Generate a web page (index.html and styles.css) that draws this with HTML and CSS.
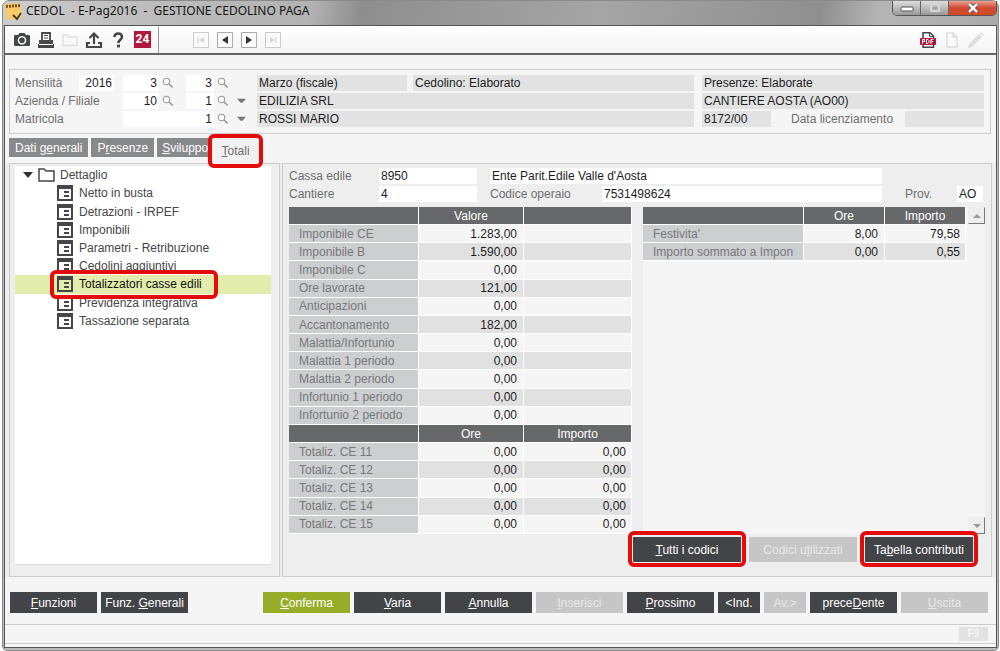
FILE: index.html
```html
<!DOCTYPE html>
<html lang="it">
<head>
<meta charset="utf-8">
<title>CEDOL - E-Pag2016 - GESTIONE CEDOLINO PAGA</title>
<link rel="stylesheet" href="styles.css">
</head>
<body>
<svg class="defs" aria-hidden="true">
  <symbol id="lens" viewBox="0 0 12 12"><circle cx="4.5" cy="4.5" r="3.2" fill="#fff" stroke="#999" stroke-width="1.1"/><path d="M7 7l3.6 3.4" stroke="#999" stroke-width="1.6"/></symbol>
  <symbol id="down" viewBox="0 0 10 6"><path d="M0 .5h10L6 5H4z" fill="#777"/></symbol>
  <symbol id="form" viewBox="0 0 16 16"><path fill="#454648" fill-rule="evenodd" d="M0 0h16v16H0zM2 4v10h12V4z"/><path d="M7 6h5v2H7zM7 10h5v2H7z" fill="#454648"/></symbol>
</svg>
<div class="window">
  <header class="titlebar">
    <svg class="app-icon" viewBox="0 0 17 18"><path d="M0 1l15-1 2 14-9 3-7-2z" fill="#f8cb68"/><path d="M1 3.500l14-1" stroke="#7a5418" stroke-width="3" stroke-dasharray="2 1"/><path d="M8 12l4 4 4-6" fill="none" stroke="#4a3b20" stroke-width="1.800"/></svg>
    <h1>CEDOL&nbsp; - E-Pag2016&nbsp; -&nbsp; GESTIONE CEDOLINO PAGA</h1>
    <div class="win-buttons">
      <button class="win-min" aria-label="Riduci a icona"><svg viewBox="0 0 14 10"><rect x="1" y="4" width="12" height="4" rx="1" fill="#fff" stroke="#555"/></svg></button>
      <button class="win-max" aria-label="Ingrandisci"><svg viewBox="0 0 14 10"><path d="M3 1h8v7H3z" fill="none" stroke="#d5d5d5" stroke-width="2"/><path d="M5 4h4v2H5z" fill="#999"/></svg></button>
      <button class="win-close" aria-label="Chiudi"><svg viewBox="0 0 14 10"><path d="M3 1l8 8M11 1L3 9" stroke="#634" stroke-width="4"/><path d="M3 1l8 8M11 1L3 9" stroke="#fff" stroke-width="2.500"/></svg></button>
    </div>
  </header>
  <main class="content">
    <div class="toolbar">
      <div class="tools">
        <button aria-label="Cattura"><svg viewBox="0 0 18 18"><path fill="#454648" fill-rule="evenodd" d="M1 5q0-1 1-1h3l1.500-2h5L13 4h3q1 0 1 1v9q0 1-1 1H2q-1 0-1-1zM9 5a4.300 4.300 0 1 0 .01 0z"/><circle cx="9" cy="9.300" r="2.800" fill="#454648"/></svg></button>
        <button aria-label="Stampa"><svg viewBox="0 0 18 18"><path d="M5 2h8v8H5z" fill="#fff" stroke="#454648" stroke-width="1.800"/><path d="M7 4.500h4M7 7h4" stroke="#454648"/><path d="M2 9h2v2h10V9h2v4H2zM1 13h16v4H1z" fill="#454648"/><path d="M2 13.500h14" stroke="#fff"/></svg></button>
        <button aria-label="Apri" disabled><svg viewBox="0 0 18 18"><path d="M2 14.500V4h5l1 2h8v8.500z" fill="none" stroke="#ddd" stroke-width="1.400"/></svg></button>
        <button aria-label="Carica"><svg viewBox="0 0 18 18"><path d="M9 13V3M4.500 7L9 2.500 13.500 7M5 12H2v4h14v-4h-3" fill="none" stroke="#454648" stroke-width="2.200"/></svg></button>
        <button aria-label="Aiuto"><svg viewBox="0 0 18 18"><path d="M5.500 6q0-3.500 3.700-3.500T13 6c0 2.500-3.500 2.500-3.500 6" fill="none" stroke="#454648" stroke-width="2.600"/><path d="M8 13.600h3v2.800H8z" fill="#454648"/></svg></button>
        <button class="b24" aria-label="24 ore">24</button>
      </div>
      <div class="nav">
        <button aria-label="Primo" disabled><svg viewBox="0 0 16 16"><path d="M.5.500h15v15H.5z" fill="#fafafa" stroke="#ccc"/><path d="M5 5v6" stroke="#ccc"/><path d="M11 5v6L6 8z" fill="#d5d5d5"/></svg></button>
        <button aria-label="Indietro"><svg viewBox="0 0 16 16"><path d="M.5.500h15v15H.5z" fill="#fafafa" stroke="#aaa"/><path d="M11 4v8L5 8z" fill="#333"/></svg></button>
        <button aria-label="Avanti"><svg viewBox="0 0 16 16"><path d="M.5.500h15v15H.5z" fill="#fafafa" stroke="#aaa"/><path d="M5 4v8l6-4z" fill="#333"/></svg></button>
        <button aria-label="Ultimo" disabled><svg viewBox="0 0 16 16"><path d="M.5.500h15v15H.5z" fill="#fafafa" stroke="#ccc"/><path d="M11 5v6" stroke="#ccc"/><path d="M5 5v6l5-3z" fill="#d5d5d5"/></svg></button>
      </div>
      <div class="docs">
        <button aria-label="PDF"><svg viewBox="0 0 18 18"><path d="M4 8V1.800h7L14.500 5v11.200H4V12" fill="#fff" stroke="#454648" stroke-width="1.500"/><path d="M10.500 2v3.500h4" fill="none" stroke="#454648"/><rect x="1" y="7" width="16" height="7" rx="1" fill="#b3163b"/><path d="M3.500 13V8.500h2v2h-2M7.500 8.500v4h1.500l1-1v-2l-1-1zM12 13V8.500h2.500M12 10.500h2" fill="none" stroke="#fff"/></svg></button>
        <button aria-label="Documento" disabled><svg viewBox="0 0 18 18"><path d="M4 2h6l4 4v10H4zM10 2v4h4" fill="none" stroke="#ddd" stroke-width="1.500"/></svg></button>
        <button aria-label="Modifica" disabled><svg viewBox="0 0 18 18"><path d="M1 17l1-4L12 3l3 3L5 16zM13 2l1-1 3 3-1 1z" fill="#ddd"/></svg></button>
      </div>
    </div>

    <section class="summary">
      <div class="keys">
        <label class="first" for="anno">Mensilità</label><input id="anno" class="year" value="2016"><span class="push"></span>
        <input class="w36" aria-label="Mese da" value="3"><button class="lens" aria-label="Cerca mese da"><svg><use href="#lens"/></svg></button>
        <input class="w28" aria-label="Mese a" value="3"><button class="lens end" aria-label="Cerca mese a"><svg><use href="#lens"/></svg></button><span class="drop"></span>
      </div>
      <div class="info two"><output>Marzo (fiscale)</output><output>Cedolino: Elaborato</output></div>
      <div class="info"><output>Presenze: Elaborate</output></div>

      <div class="keys">
        <label for="azienda">Azienda / Filiale</label><span class="push"></span>
        <input id="azienda" class="w36" value="10"><button class="lens" aria-label="Cerca azienda"><svg><use href="#lens"/></svg></button>
        <input class="w28" aria-label="Filiale" value="1"><button class="lens end" aria-label="Cerca filiale"><svg><use href="#lens"/></svg></button><button class="drop" aria-label="Elenco filiali"><svg><use href="#down"/></svg></button>
      </div>
      <div class="info"><output>EDILIZIA SRL</output></div>
      <div class="info"><output>CANTIERE AOSTA (AO00)</output></div>

      <div class="keys">
        <label for="matricola">Matricola</label><span class="push"></span>
        <input id="matricola" class="w91" value="1"><button class="lens end" aria-label="Cerca matricola"><svg><use href="#lens"/></svg></button><button class="drop" aria-label="Elenco matricole"><svg><use href="#down"/></svg></button>
      </div>
      <div class="info"><output>ROSSI MARIO</output></div>
      <div class="info fire"><output>8172/00</output><label for="lic">Data licenziamento</label><output id="lic"></output></div>
    </section>

    <nav class="tabs">
      <button>Dati g<u>e</u>nerali</button><button>P<u>r</u>esenze</button><button class="clip"><u>S</u>viluppo</button><button class="active"><u>T</u>otali</button>
    </nav>

    <div class="panels">
      <aside class="tree-panel">
        <div class="tree-box">
          <ul class="tree">
            <li class="root"><svg class="caret" viewBox="0 0 10 6"><path d="M0 0h10L5 6z" fill="#333"/></svg><svg class="folder" viewBox="0 0 17 14"><path d="M1 13V1h5l2 2h8v10z" fill="none" stroke="#454648" stroke-width="1.500"/></svg><span>Dettaglio</span></li>
            <li><svg><use href="#form"/></svg><span>Netto in busta</span></li>
            <li><svg><use href="#form"/></svg><span>Detrazioni - IRPEF</span></li>
            <li><svg><use href="#form"/></svg><span>Imponibili</span></li>
            <li><svg><use href="#form"/></svg><span>Parametri - Retribuzione</span></li>
            <li><svg><use href="#form"/></svg><span>Cedolini aggiuntivi</span></li>
            <li class="selected"><svg><use href="#form"/></svg><span>Totalizzatori casse edili</span></li>
            <li><svg><use href="#form"/></svg><span>Previdenza integrativa</span></li>
            <li><svg><use href="#form"/></svg><span>Tassazione separata</span></li>
          </ul>
        </div>
      </aside>

      <section class="detail">
        <div class="fields">
          <label for="cassa">Cassa edile</label><input id="cassa" value="8950"><input class="wide" aria-label="Descrizione cassa edile" value="Ente Parit.Edile Valle d'Aosta">
          <label class="newrow" for="cantiere">Cantiere</label><input id="cantiere" value="4"><label class="operaio" for="operaio">Codice operaio</label><input id="operaio" value="7531498624"><label class="prov" for="prov">Prov.</label><input id="prov" value="AO">
        </div>
        <div class="tables">
          <table class="left-table">
            <colgroup><col class="c-name"><col class="c-val"><col></colgroup>
            <tbody>
              <tr class="head"><th></th><th>Valore</th><th></th></tr>
              <tr><th>Imponibile CE</th><td>1.283,00</td><td></td></tr>
              <tr><th>Imponibile B</th><td>1.590,00</td><td></td></tr>
              <tr><th>Imponibile C</th><td>0,00</td><td></td></tr>
              <tr><th>Ore lavorate</th><td>121,00</td><td></td></tr>
              <tr><th>Anticipazioni</th><td>0,00</td><td></td></tr>
              <tr><th>Accantonamento</th><td>182,00</td><td></td></tr>
              <tr><th>Malattia/Infortunio</th><td>0,00</td><td></td></tr>
              <tr><th>Malattia 1 periodo</th><td>0,00</td><td></td></tr>
              <tr><th>Malattia 2 periodo</th><td>0,00</td><td></td></tr>
              <tr><th>Infortunio 1 periodo</th><td>0,00</td><td></td></tr>
              <tr><th>Infortunio 2 periodo</th><td>0,00</td><td></td></tr>
            </tbody>
            <tbody>
              <tr class="head"><th></th><th>Ore</th><th>Importo</th></tr>
              <tr><th>Totaliz. CE 11</th><td>0,00</td><td>0,00</td></tr>
              <tr><th>Totaliz. CE 12</th><td>0,00</td><td>0,00</td></tr>
              <tr><th>Totaliz. CE 13</th><td>0,00</td><td>0,00</td></tr>
              <tr><th>Totaliz. CE 14</th><td>0,00</td><td>0,00</td></tr>
              <tr><th>Totaliz. CE 15</th><td>0,00</td><td>0,00</td></tr>
            </tbody>
          </table>
          <div class="right-box">
            <div class="right-list">
              <table class="right-table">
                <colgroup><col><col class="c-num"><col class="c-num"></colgroup>
                <tbody>
                  <tr class="head"><th></th><th>Ore</th><th>Importo</th></tr>
                  <tr><th>Festivita'</th><td>8,00</td><td>79,58</td></tr>
                  <tr><th>Importo sommato a Impon</th><td>0,00</td><td>0,55</td></tr>
                </tbody>
              </table>
            </div>
            <div class="scroll">
              <button aria-label="Scorri su"><svg viewBox="0 0 8 4"><path d="M4 0l4 4H0z" fill="#999"/></svg></button>
              <button aria-label="Scorri giù"><svg viewBox="0 0 8 4"><path d="M0 0h8L4 4z" fill="#999"/></svg></button>
            </div>
          </div>
        </div>
        <div class="actions">
          <button class="ring"><u>T</u>utti i codici</button>
          <button disabled>Codici u<u>t</u>ilizzati</button>
          <button class="ring">Ta<u>b</u>ella contributi</button>
        </div>
      </section>
    </div>

    <div class="commands">
      <button><u>F</u>unzioni</button>
      <button>Funz. <u>G</u>enerali</button>
      <span class="push"></span>
      <button class="ok"><u>C</u>onferma</button>
      <button><u>V</u>aria</button>
      <button><u>A</u>nnulla</button>
      <button disabled><u>I</u>nserisci</button>
      <button><u>P</u>rossimo</button>
      <button class="small">&lt;Ind.</button>
      <button class="small" disabled>Av.&gt;</button>
      <button>prece<u>D</u>ente</button>
      <button disabled><u>U</u>scita</button>
    </div>
    <footer class="status"><button disabled>F9</button></footer>
  </main>
</div>
</body>
</html>
```

FILE: styles.css
```css
*, ::before, ::after { box-sizing: border-box; }
body { margin: 0; background: #fff; color: #1d1d1f; font: 12px/16px "Liberation Sans", Arial, sans-serif; }
button, input { font: inherit; color: inherit; margin: 0; padding: 0; border: 0; border-radius: 0; background: none; min-width: 0; }
button { white-space: nowrap; flex: none; }
button svg { display: block; }
.defs { position: absolute; width: 0; height: 0; }
.push { flex: 1; }

.window { min-height: 100vh; display: flex; flex-direction: column; padding: 0 1px 2px; margin: 0 1px 0 2px; background: #bbb; border: 1px solid #8a8a8a; border-radius: 7px 7px 5px 5px; }
.titlebar { display: flex; align-items: flex-start; height: 24px; margin: 0 -1px; padding-left: 2px; border-radius: 6px 6px 0 0; background: linear-gradient(100deg, #ccc 0%, #bdbdbd 15%, #b2b2b2 31%, #8e8e8e 36%, #a5a5a5 60%, #8f8f8f 82%, #b5b5b5 88%, #aaa 100%); }
.app-icon { width: 17px; height: 18px; margin-top: 2px; }
h1 { flex: 1; margin: 1px 0 0 4px; font: 12px/18px "Noto Sans", "Open Sans", sans-serif; color: #161616; white-space: nowrap; }
.win-buttons { display: flex; margin-right: 1px; border: 1px solid #555; border-top: 0; border-radius: 0 0 5px 5px; overflow: hidden; }
.win-buttons button { display: grid; place-items: center; height: 14px; width: 28px; border-right: 1px solid #666; background: linear-gradient(#ddd, #999); }
.win-buttons svg { width: 14px; height: 10px; }
.win-buttons .win-close { width: 47px; border: 0; background: linear-gradient(#e8a393 0, #cf4a30 50%, #d34c27); }

.content { flex: 1; display: flex; flex-direction: column; background: #f5f5f5; border: 1px solid #555; }
.toolbar { display: flex; align-items: center; height: 29px; border-bottom: 2px solid #666; background: linear-gradient(#fff, #f4f4f4); }
.toolbar svg { width: 18px; height: 18px; }
.tools { display: flex; align-items: center; gap: 6px; height: 26px; padding: 0 7px 0 8px; border-right: 1px solid #999; }
.tools .b24 { width: 17px; height: 17px; margin-left: 1px; background: #b3163b; color: #fff; font: bold 12px/17px Roboto, sans-serif; }
.nav { flex: 1; display: flex; gap: 8px; margin-left: 34px; }
.nav svg { width: 16px; height: 16px; }
.docs { display: flex; gap: 6px; padding-right: 11px; }

.summary { display: grid; grid-template-columns: 234px minmax(0, 1fr) 282px; gap: 2px 8px; margin: 14px 5px 0 4px; padding: 5px 6px 6px 5px; border: 1px solid #ccc; }
.keys, .info { display: flex; align-items: center; min-width: 0; height: 16px; }
.keys label, .fire label, .fields label { color: #6d6e70; white-space: nowrap; }
.keys .first { width: 64px; }
.keys input { height: 16px; padding-right: 2px; background: #fff; text-align: right; }
.keys .year { width: 35px; }
.keys .w36 { width: 36px; }
.keys .w28 { width: 28px; }
.keys .w91 { width: 91px; }
.lens { width: 27px; padding-left: 3px; }
.lens.end { width: 23px; }
.lens svg { width: 12px; height: 12px; }
.drop { width: 12px; }
.drop svg { width: 9px; height: 6px; }
.info output { display: block; flex: 1; height: 16px; padding: 0 2px; background: #e2e2e2; white-space: nowrap; overflow: hidden; }
.two { gap: 6px; }
.two output:first-child { flex: 0 0 150px; }
.fire output:first-child { flex: 0 0 69px; }
.fire label { margin: 0 12px 0 20px; }

.tabs { display: flex; gap: 3px; margin: 4px 4px 0; height: 25px; align-items: flex-start; }
.tabs button { height: 19px; padding: 0 6px; background: #88898b; color: #fff; }
.tabs .clip { width: 54px; padding: 0 5px; overflow: hidden; text-align: left; }
.tabs .active { width: 55px; height: 34px; margin: -4px 0 0 -6px; padding: 0; border: 4px solid #e30b0b; border-radius: 6px; background: #f1f1f1; color: #6d6e70; z-index: 1; }

.panels { flex: 1; display: flex; gap: 2px; padding: 0 4px; margin-bottom: 2px; background: #eee; }
.tree-panel { flex: 0 0 271px; padding: 2px 8px 11px 5px; border: 1px solid #ccc; display: flex; }
.tree-box { flex: 1; background: #fff; border-bottom: 1px solid #ddd; }
.tree { display: grid; grid-auto-rows: 1fr; min-height: 164px; margin: 0; padding: 0; list-style: none; color: #454648; }
.tree li { display: flex; align-items: center; gap: 6px; padding-left: 42px; white-space: nowrap; }
.tree svg { flex: none; width: 16px; height: 16px; }
.tree .root { gap: 5px; padding-left: 8px; }
.tree .caret { width: 10px; height: 6px; }
.tree .folder { width: 17px; height: 14px; }
.tree .selected { position: relative; background: #e2ecad; color: #111; }
.selected::after { content: ""; position: absolute; inset: -5px auto -5px 35px; width: 168px; border: 4px solid #e30b0b; border-radius: 6px; }

.detail { flex: 1; min-width: 0; display: flex; flex-direction: column; padding: 4px 6px 14px; border: 1px solid #ccc; }
.fields { display: grid; grid-template-columns: 90px 98px 13px 112px minmax(0, 1fr) 23px 52px 26px; row-gap: 2px; padding-right: 2px; }
.fields input { height: 16px; padding: 0 2px; background: #fff; }
.fields .wide { grid-column: 4 / 6; }
.fields .newrow { grid-column: 1; }
.fields .operaio { grid-column: 4; }
.fields .prov { grid-column: 7; }
.tables { flex: 1; display: grid; grid-template-columns: 343px minmax(0, 1fr); gap: 11px; margin-top: 5px; }
table { border-collapse: separate; border-spacing: 0; table-layout: fixed; width: 100%; }
th, td { height: 18px; padding: 0; border-right: 1px solid #fff; border-bottom: 1px solid #fff; line-height: 16px; white-space: nowrap; overflow: hidden; }
th { padding-left: 10px; background: #cdced0; color: #77787a; font-weight: normal; text-align: left; }
td { padding-right: 6px; background: #f5f5f5; text-align: right; }
td:last-child { padding-right: 5px; }
tr:nth-child(odd) td { background: #e1e1e1; }
.head th { padding: 0; background: #67686a; color: #fff; text-align: center; }
.left-table { height: 100%; }
.c-name { width: 130px; }
.c-val { width: 105px; }
.c-num { width: 81px; }
.right-box { display: flex; gap: 2px; background: #f5f5f5; }
.right-list { flex: 1; min-width: 0; }
.scroll { display: flex; flex-direction: column; justify-content: space-between; width: 17px; }
.scroll button { display: grid; place-items: center; height: 17px; border: 1px solid; border-color: #eee #777 #777 #eee; background: #eee; }
.scroll svg { width: 8px; height: 4px; }
.actions { display: flex; justify-content: flex-end; gap: 8px; margin: 3px 12px 0 0; }
.actions button { position: relative; width: 108px; height: 25px; background: #434448; color: #fff; }
.actions .ring::after { content: ""; position: absolute; inset: -6px -5px -5px; border: 4px solid #e30b0b; border-radius: 6px; }
.actions button:disabled, .commands button:disabled { background: #c6c6c6; color: #e8e8e8; }

.commands { display: flex; gap: 4px; padding: 13px 8px 11px 5px; }
.commands button { width: 87px; height: 21px; background: #434448; color: #fff; }
.commands .small { width: 42px; }
.commands .ok { background: #97ac27; }
.status { display: flex; justify-content: flex-end; height: 20px; margin-bottom: 3px; padding: 2px 8px; border: 1px solid #ccc; border-width: 1px 0; }
.status button { width: 29px; height: 14px; background: #e2e2e2; color: #fff; font-size: 10px; line-height: 14px; }
```
